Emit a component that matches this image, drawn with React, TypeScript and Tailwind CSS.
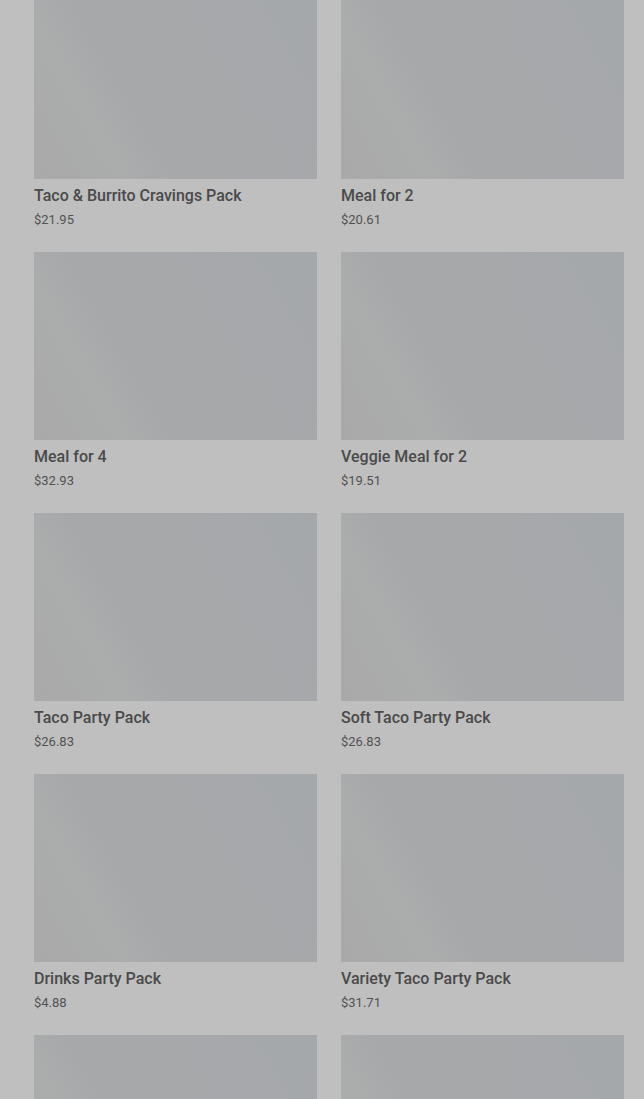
const items = [
  { name: "Taco & Burrito Cravings Pack", price: "$21.95" },
  { name: "Meal for 2", price: "$20.61" },
  { name: "Meal for 4", price: "$32.93" },
  { name: "Veggie Meal for 2", price: "$19.51" },
  { name: "Taco Party Pack", price: "$26.83" },
  { name: "Soft Taco Party Pack", price: "$26.83" },
  { name: "Drinks Party Pack", price: "$4.88" },
  { name: "Variety Taco Party Pack", price: "$31.71" },
];

const imageClass =
  "h-[188px] w-full bg-[linear-gradient(60deg,#a9a9a9_0%,#abacac_24%,#a7a8aa_36%,#a5a8ab_100%)]";

function Card({ name, price }: { name: string; price: string }) {
  return (
    <div className="flex flex-col">
      <div className={imageClass} />
      <div className="pt-[5px] text-[16px] leading-6 font-medium text-[#4a4a4a]">{name}</div>
      <div className="mt-[2px] text-[13px] leading-5 text-[#525252]">{price}</div>
    </div>
  );
}

export default function App() {
  return (
    <div className="h-[1099px] w-full overflow-hidden bg-[#bfbfbf] font-['Roboto',sans-serif]">
      <div className="mt-[-9px] grid grid-cols-2 gap-x-6 gap-y-[22px] pl-[34px] pr-[20px]">
        {items.map((it) => (
          <Card key={it.name} name={it.name} price={it.price} />
        ))}
        {/* next row, only the pictures are in view */}
        <div className={imageClass} />
        <div className={imageClass} />
      </div>
    </div>
  );
}
